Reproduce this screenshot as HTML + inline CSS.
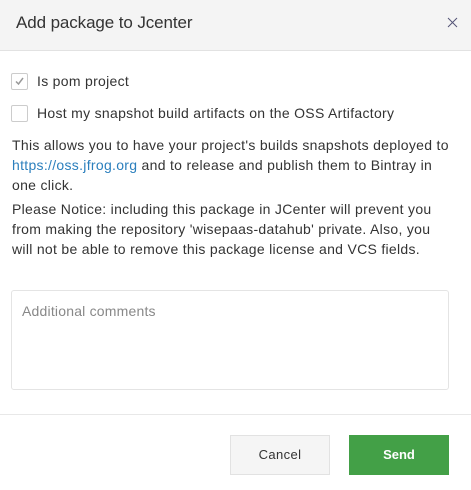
<!DOCTYPE html>
<html><head><style>
body{margin:0;width:471px;height:490px;background:#fff;font-family:"Liberation Sans",sans-serif;color:#333;position:relative;overflow:hidden}
.hd{position:absolute;left:0;top:0;width:471px;height:50px;background:#f4f4f4;border-bottom:1px solid #e2e2e2}
.hd .t{position:absolute;left:16px;top:13px;font-size:17px;color:#333;letter-spacing:-0.1px}
.x{position:absolute;left:447px;top:17px}
.cb{position:absolute;left:11px;width:15px;height:15px;border:1px solid #ccc;border-radius:2px;background:#fff}
.lb{position:absolute;left:37px;font-size:14px;letter-spacing:0.3px}
.p{position:absolute;left:12px;font-size:14px;line-height:20px;letter-spacing:0.3px;white-space:nowrap}
a{color:#2b7fbd;text-decoration:none}
.ta{position:absolute;left:11px;top:290px;width:436px;height:98px;border:1px solid #e4e4e4;border-radius:3px}
.ta span{position:absolute;left:10px;top:12px;font-size:14px;color:#888;letter-spacing:0.2px}
.div{position:absolute;left:0;top:414px;width:471px;height:1px;background:#e8e8e8}
.btn{position:absolute;top:435px;width:98px;height:38px;font-size:13px;font-weight:bold;text-align:center;line-height:38px}
</style></head><body>
<div class="hd"><div class="t">Add package to Jcenter</div>
<svg class="x" width="11" height="11" viewBox="0 0 11 11"><path d="M1 1L10 10M10 1L1 10" stroke="#557" stroke-width="1"/></svg></div>
<div class="cb" style="top:73px"><svg width="15" height="15" viewBox="0 0 15 15"><path d="M4 7.5L6.5 10L11 4" fill="none" stroke="#999" stroke-width="1.5"/></svg></div>
<div class="lb" style="top:73px">Is pom project</div>
<div class="cb" style="top:105px"></div>
<div class="lb" style="top:105px">Host my snapshot build artifacts on the OSS Artifactory</div>
<div class="p" style="top:135px">This allows you to have your project's builds snapshots deployed to<br><a>https://oss.jfrog.org</a> and to release and publish them to Bintray in<br>one click.</div>
<div class="p" style="top:199px">Please Notice: including this package in JCenter will prevent you<br>from making the repository 'wisepaas-datahub' private. Also, you<br>will not be able to remove this package license and VCS fields.</div>
<div class="ta"><span>Additional comments</span></div>
<div class="div"></div>
<div class="btn" style="left:230px;background:#f5f5f5;border:1px solid #e2e2e2;color:#333;font-weight:normal;letter-spacing:0.4px">Cancel</div>
<div class="btn" style="left:349px;width:100px;height:40px;line-height:40px;background:#43a047;color:#fff">Send</div>
</body></html>
